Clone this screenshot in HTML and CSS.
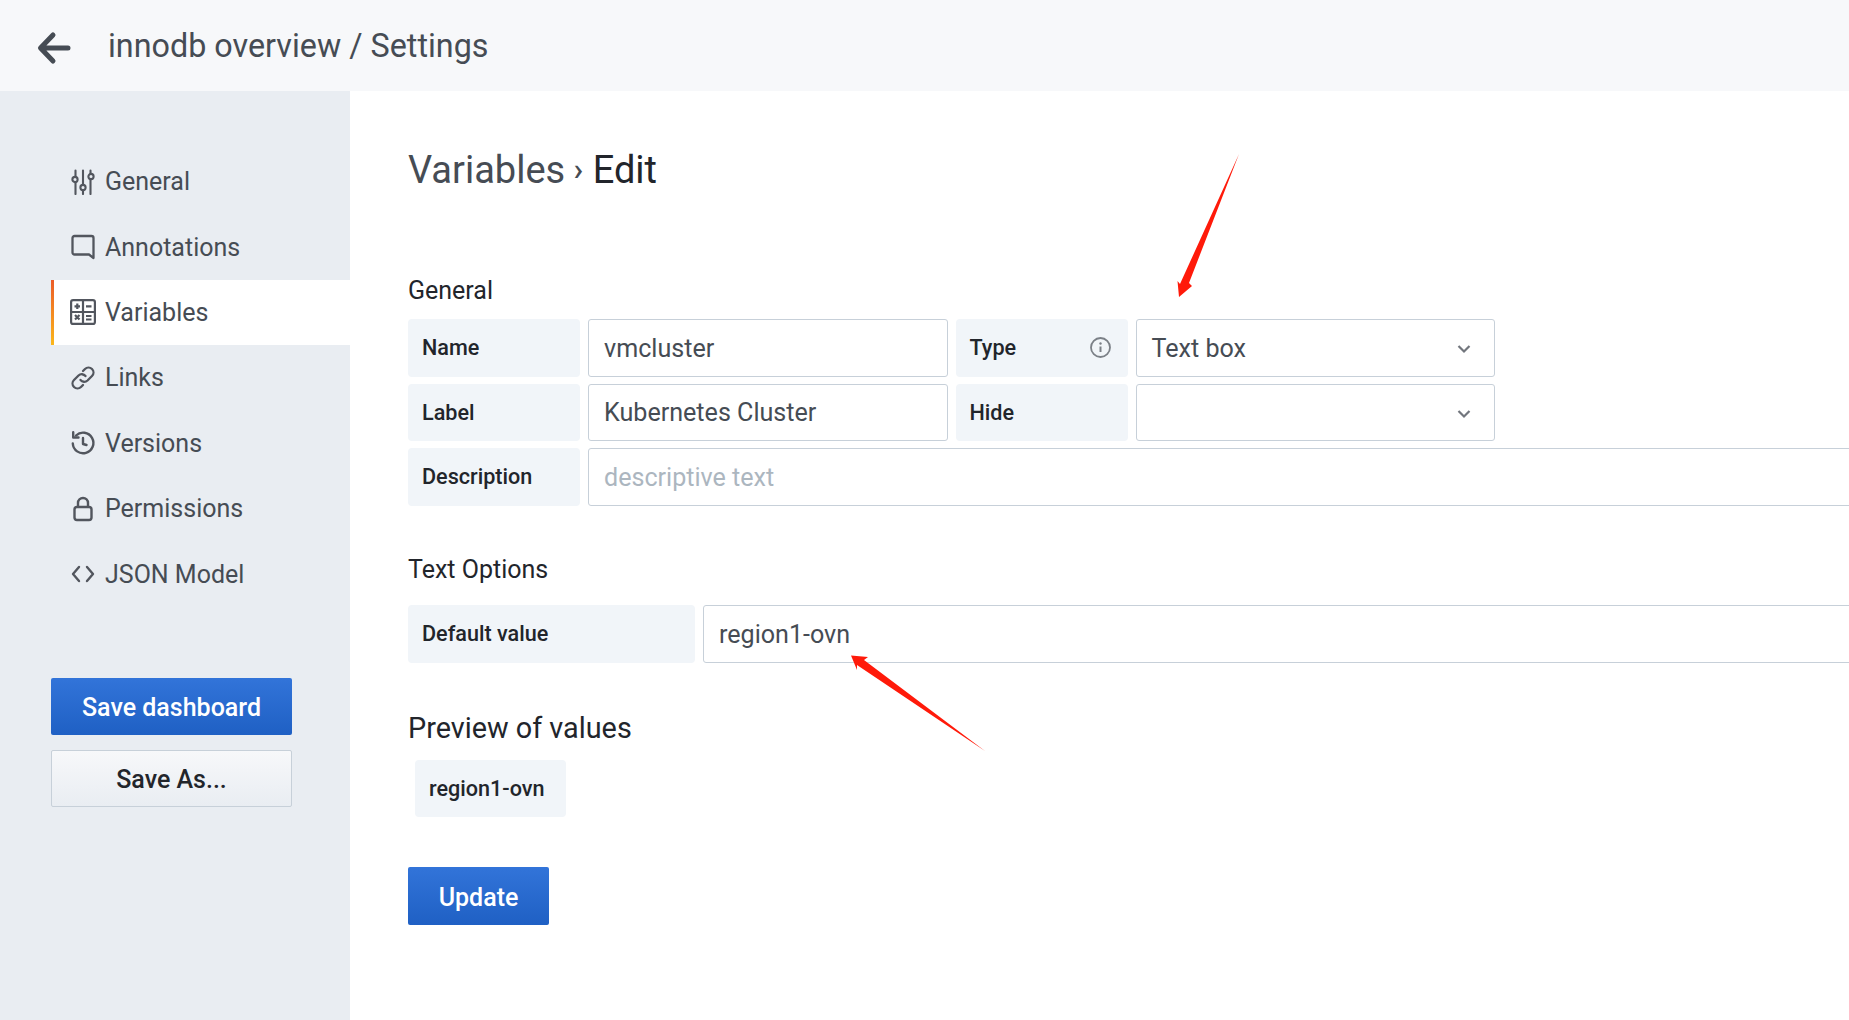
FILE: index.html
```html
<!DOCTYPE html>
<html lang="en">
<head>
<meta charset="utf-8">
<title>innodb overview / Settings</title>
<link rel="stylesheet" href="styles.css">
</head>
<body>
<header class="topbar">
  <svg class="back" viewBox="0 0 34 34" aria-hidden="true"><path d="M31 17H4M16 4 3.500 17 16 30" fill="none" stroke="#464c54" stroke-width="5" stroke-linecap="round" stroke-linejoin="round"/></svg>
  <h1 class="crumb">innodb overview / Settings</h1>
</header>
<div class="layout">
  <aside class="sidebar">
    <nav class="nav">
      <a class="nav-item">
        <svg class="nav-icon" viewBox="0 0 26 26"><g fill="none" stroke="#52565e" stroke-width="2.100" stroke-linecap="round"><path d="M5.500 1.500v6M5.500 14v11M13 1.500v14M13 22v3M20.500 1.500v3M20.500 11v14"/><circle cx="5" cy="10.500" r="2.600"/><circle cx="13" cy="18.500" r="2.600"/><circle cx="21" cy="7.500" r="2.600"/></g></svg>
        <span>General</span>
      </a>
      <a class="nav-item">
        <svg class="nav-icon" viewBox="0 0 26 26"><path d="M4.500 2h17a2 2 0 0 1 2 2v20l-4.500-3.500H4.500a2 2 0 0 1-2-2V4a2 2 0 0 1 2-2Z" fill="none" stroke="#52565e" stroke-width="2.300" stroke-linejoin="round"/></svg>
        <span>Annotations</span>
      </a>
      <a class="nav-item active">
        <svg class="nav-icon" viewBox="0 0 26 26"><g fill="none" stroke="#52565e" stroke-width="2.200"><rect x="1.100" y="1.100" width="23.800" height="23.800" rx="2"/><path d="M13 1.100v23.800M1.100 13h23.800"/><path d="M4.500 7.300h5.500M7.300 4.500v5.500M16 7.300h5.500M16 17h5.500M16 20.500h5.500M5 16l4.500 4.500M9.500 16 5 20.500"/></g></svg>
        <span>Variables</span>
      </a>
      <a class="nav-item">
        <svg class="nav-icon" viewBox="0 0 26 26"><g fill="none" stroke="#52565e" stroke-width="2.300" stroke-linecap="round"><path d="M10.500 15a4.800 4.800 0 0 0 7 .5l4.500-4.500a4.900 4.900 0 0 0-7-7l-2 2"/><path d="M15.500 11a4.800 4.800 0 0 0-7-.5L4 15a4.900 4.900 0 0 0 7 7l2-2"/></g></svg>
        <span>Links</span>
      </a>
      <a class="nav-item">
        <svg class="nav-icon" viewBox="0 0 26 26"><g fill="none" stroke="#52565e" stroke-width="2.400" stroke-linecap="round" stroke-linejoin="round"><path d="M6 5.500A10.300 10.300 0 1 1 2.800 13.500"/><path d="M3.200 2.200v5.300h5.300"/><path d="M13 8v6l3.500 1"/></g></svg>
        <span>Versions</span>
      </a>
      <a class="nav-item">
        <svg class="nav-icon" viewBox="0 0 26 26"><g fill="none" stroke="#52565e" stroke-width="2.400" stroke-linejoin="round"><rect x="4.500" y="11" width="17" height="13" rx="2.500"/><path d="M8 11V7a5 5 0 0 1 10 0v4"/></g></svg>
        <span>Permissions</span>
      </a>
      <a class="nav-item">
        <svg class="nav-icon" viewBox="0 0 26 26"><path d="M9 6 3 13l6 7M17 6l6 7-6 7" fill="none" stroke="#52565e" stroke-width="2.400" stroke-linecap="round" stroke-linejoin="round"/></svg>
        <span>JSON Model</span>
      </a>
    </nav>
    <div class="actions">
      <button class="btn btn-primary btn-wide">Save dashboard</button>
      <button class="btn btn-secondary btn-wide">Save As...</button>
    </div>
  </aside>
  <main class="content">
    <h2 class="page-title"><span class="muted">Variables</span> <span class="sep">›</span> <span>Edit</span></h2>
    <h3 class="section">General</h3>
    <div class="rows">
      <div class="row">
        <label class="lbl">Name</label>
        <div class="field f-short">vmcluster</div>
        <label class="lbl lbl-type"><span>Type</span>
          <svg class="info" viewBox="0 0 21 21"><circle cx="10.500" cy="10.500" r="9.500" fill="none" stroke="#7b8087" stroke-width="1.800"/><path d="M10.500 9.500v5.500" stroke="#7b8087" stroke-width="2"/><circle cx="10.500" cy="6.500" r="1.200" fill="#7b8087"/></svg>
        </label>
        <div class="field f-short f-select">Text box
          <svg class="chev" viewBox="0 0 14 10"><path d="M1.500 2 7 7.500 12.500 2" fill="none" stroke="#72767d" stroke-width="2.200"/></svg>
        </div>
      </div>
      <div class="row">
        <label class="lbl">Label</label>
        <div class="field f-short">Kubernetes Cluster</div>
        <label class="lbl">Hide</label>
        <div class="field f-short f-select">
          <svg class="chev" viewBox="0 0 14 10"><path d="M1.500 2 7 7.500 12.500 2" fill="none" stroke="#72767d" stroke-width="2.200"/></svg>
        </div>
      </div>
      <div class="row">
        <label class="lbl">Description</label>
        <div class="field f-grow placeholder">descriptive text</div>
      </div>
    </div>
    <h3 class="section section-text">Text Options</h3>
    <div class="row">
      <label class="lbl lbl-wide">Default value</label>
      <div class="field f-grow">region1-ovn</div>
    </div>
    <h3 class="preview-title">Preview of values</h3>
    <div class="chip">region1-ovn</div>
    <button class="btn btn-primary btn-update">Update</button>
  </main>
</div>
<svg class="annotations" viewBox="0 0 1849 1020" aria-hidden="true">
  <polygon fill="#ff1a0a" points="1239,154 1189,283 1192,286 1179,297 1177.500,281 1180,284"/>
  <polygon fill="#ff1a0a" points="985,751 864,660 868,657 851,655.500 857,670 857,665"/>
</svg>
</body>
</html>
```
FILE: styles.css
```css
* { box-sizing: border-box; }
html, body { margin: 0; height: 100%; }
body {
  width: 1849px;
  height: 1020px;
  overflow: hidden;
  position: relative;
  background: #fff;
  font-family: Roboto, "Liberation Sans", sans-serif;
  color: #464c54;
  display: flex;
  flex-direction: column;
}
.topbar {
  height: 91px;
  flex: none;
  background: #f7f8fa;
  display: flex;
  align-items: center;
  padding-left: 37px;
}
.back { width: 34px; height: 34px; margin-top: 4px; }
.crumb {
  margin: 0 0 0 37px;
  font-size: 32.300px;
  font-weight: 400;
  color: #464c54;
}
.layout { flex: 1; display: flex; min-height: 0; }
.sidebar {
  width: 350px;
  flex: none;
  background: #e9edf2;
  padding: 58px 0 0 51px;
}
.nav { display: flex; flex-direction: column; }
.nav-item {
  height: 65.400px;
  display: flex;
  align-items: center;
  gap: 9px;
  padding-left: 16px;
  font-size: 25px;
  color: #464c54;
  border-left: 3px solid transparent;
}
.nav-item.active {
  background: #fff;
  border-image: linear-gradient(#eb5a28, #fbb81a) 1;
}
.nav-icon { width: 26px; height: 26px; flex: none; }
.actions { margin-top: 71px; display: flex; flex-direction: column; gap: 15px; }
.btn {
  font-family: Roboto, "Liberation Sans", sans-serif;
  border-radius: 2px;
  display: block;
  padding: 2px 0 0;
  cursor: pointer;
  font-size: 25px;
  font-weight: 500;
}
.btn-wide { width: 241px; height: 57px; }
.btn-primary {
  background: linear-gradient(#3274d9, #1f60c4);
  color: #fff;
  border: 0;
}
.btn-secondary {
  background: linear-gradient(#f7f8fa, #e9edf2);
  color: #22252b;
  border: 1px solid #c7d0d9;
}
.content {
  flex: 1;
  min-width: 0;
  overflow: hidden;
  padding: 0 0 0 58px;
}
.page-title {
  margin: 56px 0 0;
  font-size: 38px;
  line-height: 44px;
  font-weight: 400;
  color: #22252b;
}
.muted { color: #464c54; }
.sep { font-size: 32px; font-weight: 500; color: #464c54; vertical-align: 3px; margin-left: -1px; }
.section {
  margin: 85px 0 14px;
  font-size: 25px;
  line-height: 28px;
  font-weight: 400;
  color: #22252b;
}
.section-text { margin: 50.600px 0 21px; }
.rows { display: flex; flex-direction: column; gap: 7px; }
.row { display: flex; gap: 8px; width: 1500px; height: 57.500px; }
.lbl {
  width: 172px;
  flex: none;
  background: #f1f5f9;
  border-radius: 4px;
  padding: 0 14px;
  display: flex;
  align-items: center;
  font-size: 21.600px;
  font-weight: 500;
  color: #22252b;
}
.lbl-type { justify-content: space-between; padding-right: 16.500px; }
.lbl-wide { width: 287px; }
.info { width: 21px; height: 21px; }
.field {
  border: 1px solid #c7d0d9;
  border-radius: 3px;
  background: #fff;
  padding: 1px 15px 0;
  display: flex;
  align-items: center;
  font-size: 25.100px;
  color: #464c54;
}
.f-short { width: 359.500px; flex: none; }
.f-select { position: relative; }
.f-grow { flex: 1; }
.placeholder { color: #acb6bf; }
.chev { width: 14px; height: 10px; position: absolute; right: 23px; top: 24px; }
.preview-title {
  margin: 48px 0 15.500px;
  font-size: 28.800px;
  line-height: 34px;
  font-weight: 400;
  color: #22252b;
}
.chip {
  margin-left: 7px;
  width: 151px;
  height: 57px;
  background: #f1f5f9;
  border-radius: 4px;
  display: flex;
  align-items: center;
  padding-left: 14px;
  font-size: 21.600px;
  font-weight: 500;
  color: #22252b;
}
.btn-update {
  margin-top: 50px;
  width: 141px;
  height: 58px;
}
.annotations {
  position: absolute;
  left: 0;
  top: 0;
  width: 1849px;
  height: 1020px;
  pointer-events: none;
}
```
